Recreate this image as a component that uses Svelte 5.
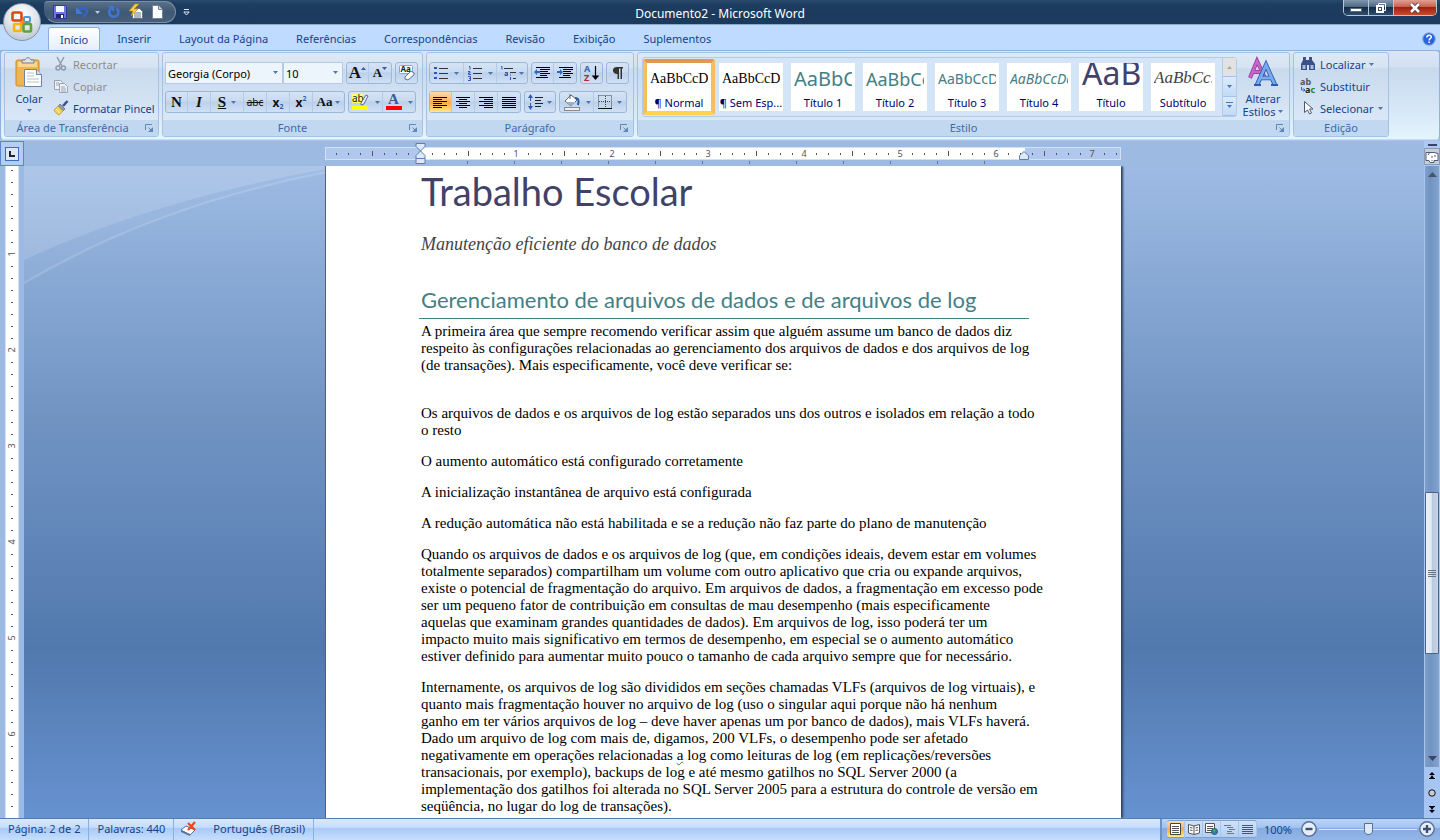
<script lang="ts">
	const tabs = [
		'Início',
		'Inserir',
		'Layout da Página',
		'Referências',
		'Correspondências',
		'Revisão',
		'Exibição',
		'Suplementos'
	];

	const styles = [
		{ name: '¶ Normal', sample: 'AaBbCcDd', kind: 'serif' },
		{ name: '¶ Sem Esp...', sample: 'AaBbCcDd', kind: 'serif' },
		{ name: 'Título 1', sample: 'AaBbCc', kind: 'h1' },
		{ name: 'Título 2', sample: 'AaBbCc', kind: 'h2' },
		{ name: 'Título 3', sample: 'AaBbCcD', kind: 'h3' },
		{ name: 'Título 4', sample: 'AaBbCcDd', kind: 'h4' },
		{ name: 'Título', sample: 'AaB', kind: 'title' },
		{ name: 'Subtítulo', sample: 'AaBbCc.', kind: 'sub' }
	];

	// Eighths of an inch, counted from the left margin and from the top one
	const hMarks = Array.from({ length: 66 }, (_, i) => i - 7);
	const vMarks = Array.from({ length: 56 }, (_, i) => i + 1);

	const intro = [
		'A primeira área que sempre recomendo verificar assim que alguém assume um banco de dados diz',
		'respeito às configurações relacionadas ao gerenciamento dos arquivos de dados e dos arquivos de log',
		'(de transações). Mais especificamente, você deve verificar se:'
	];

	// Text between bars is flagged by the grammar checker
	const paragraphs = [
		[
			'Os arquivos de dados e os arquivos de log estão separados uns dos outros e isolados em relação a todo',
			'o resto'
		],
		['O aumento automático está configurado corretamente'],
		['A inicialização instantânea de arquivo está configurada'],
		['A redução automática não está habilitada e se a redução não faz parte do plano de manutenção'],
		[
			'Quando os arquivos de dados e os arquivos de log (que, em condições ideais, devem estar em volumes',
			'totalmente separados) compartilham um volume com outro aplicativo que cria ou expande arquivos,',
			'existe o potencial de fragmentação do arquivo. Em arquivos de dados, a fragmentação em excesso pode',
			'ser um pequeno fator de contribuição em consultas de mau desempenho (mais especificamente',
			'aquelas que examinam grandes quantidades de dados). Em arquivos de log, isso poderá ter um',
			'impacto muito mais significativo em termos de desempenho, em especial se o aumento automático',
			'estiver definido para aumentar muito pouco o tamanho de cada arquivo sempre que for necessário.'
		],
		[
			'Internamente, os arquivos de log são divididos em seções chamadas VLFs (arquivos de log virtuais), e',
			'quanto mais fragmentação houver no arquivo de log (uso o singular aqui porque não há nenhum',
			'ganho em ter vários arquivos de log – deve haver apenas um por banco de dados), mais VLFs haverá.',
			'Dado um arquivo de log com mais de, digamos, 200 VLFs, o desempenho pode ser afetado',
			'negativamente em operações relacionadas |a| log como leituras de log (em replicações/reversões',
			'transacionais, por exemplo), backups de log e até mesmo gatilhos no SQL Server 2000 (a',
			'implementação dos gatilhos foi alterada no SQL Server 2005 para a estrutura do controle de versão em',
			'seqüência, no lugar do log de transações).'
		]
	];

	let activeTab = $state('Início');
	let activeStyle = $state(0);
	let font = $state('Georgia (Corpo)');
	let size = $state('10');
</script>

{#snippet arrow()}
	<svg class="arrow" width="5" height="3" viewBox="0 0 5 3"><path d="M0 0h5L2.5 3z" fill="#4a78b4" /></svg>
{/snippet}

{#snippet launcher(label: string)}
	<button class="launcher" aria-label={label}>
		<svg width="9" height="9" viewBox="0 0 9 9" fill="none" stroke="#6287b0">
			<path d="M.5 6V.5H7M3.5 3.5l3 3" />
			<path d="M8 3v5H3z" fill="#6287b0" stroke="none" />
		</svg>
	</button>
{/snippet}

{#snippet lines(rows: number[][])}
	<svg width="15" height="13" viewBox="0 0 15 13">
		{#each rows as [x, w], i}
			<rect {x} y={i * 2 + 1} width={w} height="1" fill="#000" />
		{/each}
	</svg>
{/snippet}

{#snippet paragraph(rows: string[])}
	<p>
		{#each rows as row}
			<span class="line">{#each row.split('|') as part, i}<span class:grammar={i === 1}>{part}</span>{/each}</span>
		{/each}
	</p>
{/snippet}

<div class="word">
	<header class="titlebar">
		<button class="office" aria-label="Botão Office">
			<svg width="24" height="24" viewBox="0 0 24 24" fill="none" stroke-width="2.6">
				<rect x="2.500" y="2.500" width="9" height="8" rx="1.500" stroke="#dc4a12" />
				<rect x="14" y="7" width="6" height="5" rx="1" stroke="#4a9bdc" stroke-width="2" />
				<rect x="4" y="14" width="7" height="7" rx="1" stroke="#f5b416" />
				<rect x="13.500" y="14" width="7.500" height="7.500" rx="1" stroke="#5aa436" />
				<path d="M10 12.500h5M12.500 10v5" stroke="#f08c1e" stroke-width="1.500" />
			</svg>
		</button>
		<div class="quick">
			<button aria-label="Salvar">
				<svg width="16" height="16" viewBox="0 0 16 16">
					<path d="M1.500 1.500h12l1 1v12h-13z" fill="#6f74e0" stroke="#34379c" />
					<path d="M4 2h8v6H4z" fill="#f5f7ff" />
					<path d="M4 10h8v4H4z" fill="#252763" />
					<path d="M9 11h2v3H9z" fill="#fff" />
				</svg>
			</button>
			<button class="undo" aria-label="Desfazer">
				<svg width="15" height="14" viewBox="0 0 15 14" fill="none">
					<path d="M4 6c2-4 8-4 8 0 0 3-2 4-4 6" stroke="#2f66c8" stroke-width="2.400" />
					<path d="M1 2v7h7z" fill="#3f78d8" />
				</svg>
				<svg width="5" height="3" viewBox="0 0 5 3"><path d="M0 0h5L2.500 3z" fill="#b8cce4" /></svg>
			</button>
			<button aria-label="Refazer">
				<svg width="14" height="14" viewBox="0 0 14 14" fill="none">
					<path d="M9.500 3.400a4.600 4.600 0 1 1-6 .6" stroke="#3f76d4" stroke-width="2.600" />
					<path d="M1 1h6v6z" fill="#3f76d4" />
				</svg>
			</button>
			<button aria-label="Novo do modelo">
				<svg width="16" height="16" viewBox="0 0 16 16">
					<path d="M4.500 4.500h7l3 3v7h-10z" fill="#fff" stroke="#63738a" />
					<path d="M6 9h7M6 11h7M6 13h7" stroke="#63738a" />
					<path d="M7 0L1 7h4l-2 5 7-7H6l5-5z" fill="#fdd23a" stroke="#c98a12" stroke-width=".6" />
				</svg>
			</button>
			<button aria-label="Novo">
				<svg width="13" height="16" viewBox="0 0 13 16">
					<path d="M1.500 1.500h6l4 4v9h-10z" fill="#fff" stroke="#71829c" />
					<path d="M7.500 1.500v4h4" fill="#cfd9e8" stroke="#71829c" />
				</svg>
			</button>
		</div>
		<button class="customize" aria-label="Personalizar">
			<svg width="7" height="7" viewBox="0 0 7 7"><path d="M1 .5h5" stroke="#dce8f6" /><path d="M.8 3h5.400L3.500 6z" fill="none" stroke="#dce8f6" /></svg>
		</button>
		<h1>Documento2 - Microsoft Word</h1>
		<div class="window-buttons">
			<button aria-label="Minimizar">
				<svg width="12" height="12" viewBox="0 0 12 12"><path d="M.5 6.500h11v3H.5z" fill="#fff" stroke="#5c6b7c" /></svg>
			</button>
			<button aria-label="Restaurar">
				<svg width="12" height="12" viewBox="0 0 12 12" fill="none">
					<path d="M3.500 1.500h7v7h-7z" stroke="#fff" />
					<path d="M2 4h6v6H2z" fill="#34506e" stroke="#fff" stroke-width="2" />
					<path d="M4 6h2v2H4z" fill="#fff" />
				</svg>
			</button>
			<button class="close" aria-label="Fechar">
				<svg width="12" height="10" viewBox="0 0 12 10"><path d="M2 1l8 8M10 1L2 9" stroke="#4d2c2c" stroke-width="4" /><path d="M2 1l8 8M10 1L2 9" stroke="#fff" stroke-width="2.600" /></svg>
			</button>
		</div>
	</header>

	<nav class="tabs">
		{#each tabs as tab}
			<button class:active={tab === activeTab} onclick={() => (activeTab = tab)}>{tab}</button>
		{/each}
		<button class="help" aria-label="Ajuda">
			<svg width="14" height="14" viewBox="0 0 14 14">
				<circle cx="7" cy="7" r="6.300" fill="#2a63dc" stroke="#8fb0e0" />
				<path d="M4.800 5.400c0-3 4.500-2.800 4.500-.3 0 1.600-2.200 1.500-2.200 3.300" fill="none" stroke="#fff" stroke-width="1.500" />
				<path d="M6.300 9.500h1.600v1.600H6.300z" fill="#fff" />
			</svg>
		</button>
	</nav>

	<div class="ribbon">
		<section class="group clipboard">
			<div class="body">
				<button class="paste">
					<svg width="30" height="32" viewBox="0 0 30 32">
						<rect x="2" y="3" width="23" height="26" rx="1.500" fill="#efb551" stroke="#c98a2c" />
						<path d="M4 5h19v5H4z" fill="#f9d78e" />
						<path d="M8 6V3h3c1-3 5-3 6 0h3v3z" fill="#dfe3e8" stroke="#7b7f86" />
						<path d="M10.500 12.500h12l5 5v12h-17z" fill="#fff" stroke="#6b83a6" />
						<path d="M22.500 12.500v5h5" fill="#d6e2f2" stroke="#6b83a6" />
						<path d="M13 16h7M13 19h7M13 22h12M13 25h12" stroke="#b4bfcd" />
					</svg>
					<span>Colar</span>
					{@render arrow()}
				</button>
				<div class="stack">
					<button disabled>
						<svg width="16" height="16" viewBox="0 0 16 16" fill="none" stroke="#8f9bab" stroke-width="1.500">
							<path d="M4 1l5 9M11 1L6 10" />
							<circle cx="5" cy="12" r="2" /><circle cx="10.500" cy="12" r="2" />
						</svg>
						Recortar
					</button>
					<button disabled>
						<svg width="16" height="16" viewBox="0 0 16 16" fill="#eef2f6" stroke="#98a3b3">
							<path d="M1.500 2.500h6l2 2v7h-8z" /><path d="M6.500 5.500h5l3 3v6h-8z" />
							<path d="M3 5h3M3 7h3M8 9h4M8 11h5M8 13h5" />
						</svg>
						Copiar
					</button>
					<button>
						<svg width="16" height="16" viewBox="0 0 16 16">
							<path d="M14.500 1L10 6" stroke="#3c4f94" stroke-width="2.600" />
							<path d="M7 4l5 5-2 1.500L5.500 6z" fill="#93a2c0" stroke="#515e80" stroke-width=".7" />
							<path d="M5 6l5 5-4 4c-2-1-4-3-5-5z" fill="#f4cf62" stroke="#b98b20" stroke-width=".7" />
							<path d="M3 9l4 4" stroke="#fff3b8" />
						</svg>
						Formatar Pincel
					</button>
				</div>
			</div>
			<footer>Área de Transferência{@render launcher('Área de Transferência')}</footer>
		</section>

		<section class="group">
			<div class="body rows">
				<div class="row">
					<div class="combos">
						<label class="combo family">
							<select bind:value={font} aria-label="Fonte">
								<option>Georgia (Corpo)</option>
								<option>Trebuchet MS</option>
							</select>
							{@render arrow()}
						</label>
						<label class="combo">
							<select bind:value={size} aria-label="Tamanho da fonte">
								<option>10</option>
								<option>12</option>
							</select>
							{@render arrow()}
						</label>
					</div>
					<div class="set">
						<button class="grow" aria-label="Aumentar fonte">A<svg width="5" height="3" viewBox="0 0 5 3"><path d="M0 3h5L2.500 0z" fill="#2f5f9f" /></svg></button>
						<button class="shrink" aria-label="Reduzir fonte">A<svg width="5" height="3" viewBox="0 0 5 3"><path d="M0 0h5L2.500 3z" fill="#2f5f9f" /></svg></button>
					</div>
					<div class="set">
						<button aria-label="Limpar formatação">
							<svg width="18" height="18" viewBox="0 0 18 18">
								<rect x="1.500" y="1.500" width="13" height="8" rx="1" fill="#fff" stroke="#8ba6cc" />
								<text x="2.500" y="8" font-size="8" font-weight="bold" fill="#222">Aa</text>
								<path d="M7 13l6-6 3 2v2l-6 5-3-1z" fill="#f4f6fa" stroke="#5f7192" />
							</svg>
						</button>
					</div>
				</div>
				<div class="row">
					<div class="set">
						<button class="glyph bold" aria-label="Negrito">N</button>
						<button class="glyph italic" aria-label="Itálico">I</button>
						<button class="glyph under wide" aria-label="Sublinhado"><u>S</u>{@render arrow()}</button>
						<button class="strike" aria-label="Tachado"><s>abc</s></button>
						<button class="script" aria-label="Subscrito">x<sub>2</sub></button>
						<button class="script" aria-label="Sobrescrito">x<sup>2</sup></button>
						<button class="case" aria-label="Maiúsculas e minúsculas">Aa{@render arrow()}</button>
					</div>
					<div class="set">
						<button class="wide" aria-label="Cor do realce">
							<svg width="18" height="18" viewBox="0 0 18 18">
								<path d="M0 1h11v9H0z" fill="#ffff6a" />
								<text x="0" y="9" font-size="10" fill="#222">ab</text>
								<path d="M9 10l5-8 2 1-4 8-3 1z" fill="#e8eef8" stroke="#5b6f92" />
								<path d="M0 13h16v4H0z" fill="#ff0" />
							</svg>
							{@render arrow()}
						</button>
						<button class="wide" aria-label="Cor da fonte">
							<svg width="18" height="18" viewBox="0 0 18 18">
								<text x="3" y="11" font-size="15" font-weight="bold" class="serif-glyph" fill="#3b5b9e">A</text>
								<path d="M1 13h16v4H1z" fill="#f00" />
							</svg>
							{@render arrow()}
						</button>
					</div>
				</div>
			</div>
			<footer>Fonte{@render launcher('Fonte')}</footer>
		</section>

		<section class="group">
			<div class="body rows">
				<div class="row">
					<div class="set">
						<button class="wide" aria-label="Marcadores">
							<svg width="15" height="14" viewBox="0 0 15 14">
								<path d="M0 1h3v2H0zM0 6h3v2H0zM0 11h3v2H0z" fill="#3056ae" />
								<path d="M5 2.500h9M5 7.500h9M5 12.500h9" stroke="#333" />
							</svg>
							{@render arrow()}
						</button>
						<button class="wide" aria-label="Numeração">
							<svg width="15" height="15" viewBox="0 0 15 15">
								<path d="M1 .5h1v3M0 5.500h2v1.500H.5v1.500H3M0 10.500h2.500v4H0M1 12.500h1" fill="none" stroke="#3056ae" />
								<path d="M5 2.500h9M5 7.500h9M5 12.500h9" stroke="#333" />
							</svg>
							{@render arrow()}
						</button>
						<button class="multi" aria-label="Lista de vários níveis">
							<svg width="17" height="15" viewBox="0 0 17 15">
								<path d="M1 .5h1v3M5 6.500h2.500v3H5v-1.500h2M10.500 11v3M10.500 8.500v1" fill="none" stroke="#3056ae" />
								<path d="M4 2.500h9M10 6.500h6M13 12.500h3" stroke="#333" />
							</svg>
							{@render arrow()}
						</button>
					</div>
					<div class="set">
						<button aria-label="Diminuir recuo">
							<svg width="17" height="14" viewBox="0 0 17 14">
								<path d="M2 1.500h14M7 3.500h9M7 5.500h7M7 7.500h9M7 9.500h6M2 11.500h12" stroke="#000" />
								<path d="M6.500 1v12" stroke="#000" stroke-dasharray="1 1" />
								<path d="M0 6l3-3v2h3v2H3v2z" fill="#2f66c4" />
							</svg>
						</button>
						<button aria-label="Aumentar recuo">
							<svg width="17" height="14" viewBox="0 0 17 14">
								<path d="M2 1.500h14M7 3.500h9M7 5.500h7M7 7.500h9M7 9.500h6M2 11.500h12" stroke="#000" />
								<path d="M6.500 1v12" stroke="#000" stroke-dasharray="1 1" />
								<path d="M6 6L3 3v2H0v2h3v2z" fill="#2f66c4" />
							</svg>
						</button>
					</div>
					<div class="set">
						<button aria-label="Classificar">
							<svg width="17" height="18" viewBox="0 0 17 18">
								<text x="1" y="8" font-size="9" font-weight="bold" fill="#3c62b0">A</text>
								<text x="1" y="17" font-size="9" font-weight="bold" fill="#a22c2c">Z</text>
								<path d="M12.500 2v12M10 12l2.500 3 2.500-3z" fill="#000" stroke="#000" stroke-width="1.200" />
							</svg>
						</button>
					</div>
					<div class="set">
						<button aria-label="Mostrar tudo">
							<svg width="12" height="14" viewBox="0 0 12 14">
								<path d="M5 1h6v1.500H10V13H8.500V2.500H7V13H5.500V8C-.5 8-.5 1 5 1z" fill="#333" />
							</svg>
						</button>
					</div>
				</div>
				<div class="row">
					<div class="set">
						<button class="pressed" aria-label="Alinhar à esquerda">{@render lines([[0, 14], [0, 9], [0, 14], [0, 9], [0, 14], [0, 9]])}</button>
						<button aria-label="Centralizar">{@render lines([[0, 14], [3, 8], [0, 14], [3, 8], [0, 14], [3, 8]])}</button>
						<button aria-label="Alinhar à direita">{@render lines([[0, 14], [5, 9], [0, 14], [5, 9], [0, 14], [5, 9]])}</button>
						<button aria-label="Justificar">{@render lines([[0, 14], [0, 14], [0, 14], [0, 14], [0, 14], [0, 14]])}</button>
					</div>
					<div class="set">
						<button class="spacing" aria-label="Espaçamento">
							<svg width="16" height="16" viewBox="0 0 16 16">
								<path d="M2.500 3v10" stroke="#2f5cae" stroke-dasharray="4 2" />
								<path d="M0 4l2.500-4L5 4zM0 12l2.500 4L5 12z" fill="#2f5cae" />
								<path d="M7 3.500h8M7 6.500h6M7 9.500h8M7 12.500h6" stroke="#222" />
							</svg>
							{@render arrow()}
						</button>
					</div>
					<div class="set">
						<button class="wide" aria-label="Sombreamento">
							<svg width="18" height="18" viewBox="0 0 18 18">
								<path d="M2 8l6-6 6 5-6 6z" fill="#fff" stroke="#5c6472" />
								<path d="M3 9h10l-5 4z" fill="#9bb2cf" />
								<path d="M7 1v5" stroke="#5c6472" />
								<path d="M12 5c4 0 4 3 3 7" fill="none" stroke="#2757a8" stroke-width="2" />
								<rect x="1.500" y="14.500" width="15" height="3" fill="#eee" stroke="#888" />
							</svg>
							{@render arrow()}
						</button>
						<button class="wide" aria-label="Bordas">
							<svg width="14" height="14" viewBox="0 0 14 14" fill="none" stroke="#444">
								<path d="M.5.5h13v12M.5.5v12M7.500 1v12M1 6.500h12" stroke-dasharray="1 1" />
								<path d="M0 13.500h14" stroke="#111" />
							</svg>
							{@render arrow()}
						</button>
					</div>
				</div>
			</div>
			<footer>Parágrafo{@render launcher('Parágrafo')}</footer>
		</section>

		<section class="group style-group">
			<div class="body">
				<div class="gallery">
					<div class="cards">
						{#each styles as style, i}
							<button class="card" class:selected={i === activeStyle} onclick={() => (activeStyle = i)}>
								<span class="sample {style.kind}">{style.sample}</span>
								<span class="name">{style.name}</span>
							</button>
						{/each}
					</div>
					<div class="gallery-scroll">
						<button disabled aria-label="Linha anterior"><svg width="5" height="3" viewBox="0 0 5 3"><path d="M0 3h5L2.500 0z" fill="#a9a9a9" /></svg></button>
						<button aria-label="Próxima linha">{@render arrow()}</button>
						<button aria-label="Mais">
							<svg width="7" height="7" viewBox="0 0 7 7"><path d="M0 .5h7" stroke="#4a78b4" /><path d="M1 3h5L3.500 6z" fill="#4a78b4" /></svg>
						</button>
					</div>
				</div>
				<button class="change-styles">
					<svg width="32" height="30" viewBox="0 0 32 30" fill="none">
						<path d="M3 20L10 3l8 17M5.500 14h10" stroke="#8c3a9c" stroke-width="4" />
						<path d="M3 20L10 3l8 17M5.500 14h10" stroke="#ce62c8" stroke-width="2.400" />
						<path d="M10 27L19 7l9 20M12 20h13" stroke="#2c5cac" stroke-width="4.500" />
						<path d="M10 27L19 7l9 20M12 20h13" stroke="#78aaf0" stroke-width="2.800" />
						<path d="M7 27h7M24 27h7" stroke="#2c5cac" stroke-width="2" />
					</svg>
					<span>Alterar</span>
					<span>Estilos {@render arrow()}</span>
				</button>
			</div>
			<footer>Estilo{@render launcher('Estilo')}</footer>
		</section>

		<section class="group editing">
			<div class="body">
				<div class="stack">
					<button>
						<svg width="16" height="16" viewBox="0 0 16 16" fill="#3a5288">
							<path d="M3 1h3v3h3V1h3v3l3 4v6H9V9H7v5H1V8l2-4z" /><path d="M2.500 9h3v4h-3zM10.500 9h3v4h-3z" fill="#a9bde0" />
						</svg>
						Localizar {@render arrow()}
					</button>
					<button>
						<svg width="16" height="16" viewBox="0 0 16 16" font-weight="bold">
							<text x="0" y="7" font-size="9" fill="#555">ab</text>
							<text x="5" y="15" font-size="9" fill="#222">a<tspan fill="#21852c">c</tspan></text>
							<path d="M1.500 9v3H5M3.500 10.500L5 12l-1.500 1.500" fill="none" stroke="#3c62b0" />
						</svg>
						Substituir
					</button>
					<button>
						<svg width="16" height="16" viewBox="0 0 16 16"><path d="M4.500 1.500v11l3-2.500 2 4 2-1-2-4h3.500z" fill="#fff" stroke="#4c5a70" /></svg>
						Selecionar {@render arrow()}
					</button>
				</div>
			</div>
			<footer>Edição</footer>
		</section>
	</div>

	<div class="ruler-bar">
		<button class="tab-kind" aria-label="Tabulação esquerda">
			<svg width="14" height="14" viewBox="0 0 14 14"><rect x=".5" y=".5" width="13" height="13" fill="#dce8fa" stroke="#3f6cc0" /><path d="M5 4v5h5" fill="none" stroke="#222" stroke-width="2" /></svg>
		</button>
		<div class="ruler-area">
			<div class="ruler">
				<div class="scale">
					{#each hMarks as k}
						<span class="mark" class:half={k % 8 === 4 || k % 8 === -4} class:number={k % 8 === 0}>
							{#if k % 8 === 0 && k > 0}{k / 8}{/if}
						</span>
					{/each}
				</div>
				<div class="stops">
					{#each Array(13) as _}<span></span>{/each}
				</div>
				<svg class="indent left" width="11" height="22" viewBox="0 0 11 22" fill="#dde8f8" stroke="#5b7fb4">
					<path d="M1 .5h9v3L5.500 8 1 3.500zM1 15.500v-3L5.500 8l4.500 4.500v3zM1 15.500h9v5H1z" />
				</svg>
				<svg class="indent right" width="10" height="9" viewBox="0 0 10 9" fill="#dde8f8" stroke="#5b7fb4"><path d="M.5 8.500v-4L5 .5l4.500 4v4z" /></svg>
			</div>
		</div>
		<div class="ruler-toggle">
			<i></i>
			<button aria-label="Exibir régua">
				<svg width="14" height="13" viewBox="0 0 14 13" fill="#fff" stroke="#4c5a78"><path d="M1 2.500h8l4 1v7h-4v2H5l-1-2H1zM3 5l2-3M7 6v2M10 5v2M7 10v1" /></svg>
			</button>
		</div>
	</div>

	<main>
		<div class="v-ruler">
			<div class="v-scale">
				{#each vMarks as k}
					<span class:half={k % 8 === 4} class:number={k % 8 === 0}>{#if k % 8 === 0}<b>{k / 8}</b>{/if}</span>
				{/each}
			</div>
		</div>
		<div class="workspace">
			<svg class="swoosh" width="302" height="120" viewBox="0 0 302 120">
				<path d="M0 0h302v3Q130 34 0 94z" fill="#fff" opacity=".17" />
				<path d="M0 119Q130 42 302 8V3Q130 34 0 94z" fill="#fff" opacity=".04" />
				<path d="M0 117Q130 40 302 6" fill="none" stroke="#fff" stroke-width="2" opacity=".14" />
			</svg>
			<article class="page">
				<h2 class="doc-title">Trabalho Escolar</h2>
				<p class="doc-subtitle">Manutenção eficiente do banco de dados</p>
				<h3>Gerenciamento de arquivos de dados e de arquivos de log</h3>
				<div class="intro">{@render paragraph(intro)}</div>
				{#each paragraphs as rows}
					{@render paragraph(rows)}
				{/each}
			</article>
		</div>
		<div class="scrollbar">
			<div class="track">
				<button aria-label="Para cima"><svg width="9" height="5" viewBox="0 0 9 5"><path d="M0 5h9L4.500 0z" fill="#47536e" /></svg></button>
				<div class="before"></div>
				<div class="thumb"><i></i></div>
				<div class="after"></div>
				<button aria-label="Para baixo"><svg width="9" height="5" viewBox="0 0 9 5"><path d="M0 0h9L4.500 5z" fill="#3c4464" /></svg></button>
			</div>
			<button class="browse" aria-label="Página anterior"><svg width="6" height="7" viewBox="0 0 6 7"><path d="M0 3L3 0l3 3zM1 6l2-3 2 3zM0 6h6v1H0z" /></svg></button>
			<button class="browse" aria-label="Selecionar objeto"><svg width="8" height="8" viewBox="0 0 8 8"><circle cx="4" cy="4" r="3.200" fill="#c9ccd2" stroke="#111" /></svg></button>
			<button class="browse" aria-label="Próxima página"><svg width="6" height="7" viewBox="0 0 6 7"><path d="M0 4l3 3 3-3zM1 1l2 3 2-3zM0 0h6v1H0z" /></svg></button>
		</div>
	</main>

	<footer class="status">
		<span class="cell">Página: 2 de 2</span>
		<span class="cell">Palavras: 440</span>
		<span class="cell spell">
			<svg width="17" height="15" viewBox="0 0 17 15">
				<path d="M1 9l5-4 9 4-5 5z" fill="#fff" stroke="#5572a0" /><path d="M1 9v2l9 4v-2z" fill="#5572a0" />
				<path d="M8 2l7 7M15 1L8 9" stroke="#e8481c" stroke-width="2.200" />
			</svg>
			Português (Brasil)
		</span>
		<div class="tools">
			<div class="views">
				<button class="pressed" aria-label="Layout de impressão"><svg width="11" height="12" viewBox="0 0 11 12"><path d="M.5.5h10v11H.5z" fill="#fff" stroke="#444" /><path d="M2 3.500h7M2 5.500h7M2 7.500h7M2 9.500h7" stroke="#555" /></svg></button>
				<button aria-label="Leitura"><svg width="12" height="12" viewBox="0 0 12 12"><path d="M.5 1.500L6 3l5.500-1.500V10L6 11.500.5 10zM6 3v8" fill="#fff" stroke="#555" /><path d="M2 4.500l2.500.5M2 7l2.500.5M10 4.500L7.500 5M10 7l-2.500.5" stroke="#555" /></svg></button>
				<button aria-label="Layout da Web"><svg width="13" height="12" viewBox="0 0 13 12"><path d="M.5.5h9v9h-9z" fill="#fff" stroke="#555" /><path d="M2 3.500h6M2 5.500h6M2 7.500h5" stroke="#555" /><circle cx="9.500" cy="8.500" r="3" fill="#2e86a8" stroke="#2a5a6c" /><path d="M8 7l2-1v3z" fill="#59b84a" /></svg></button>
				<button aria-label="Estrutura de tópicos"><svg width="11" height="11" viewBox="0 0 11 11"><path d="M0 1.500h7M3 3.500h6M5 5.500h6M3 7.500h5M3 9.500h7" stroke="#777" /></svg></button>
				<button aria-label="Rascunho"><svg width="11" height="11" viewBox="0 0 11 11"><path d="M0 1.500h11M0 3.500h11M0 5.500h11M0 7.500h11M0 9.500h11" stroke="#555" /></svg></button>
			</div>
			<button class="percent">100%</button>
			<button class="round" aria-label="Reduzir"><svg width="16" height="16" viewBox="0 0 16 16"><circle cx="8" cy="8" r="7.200" fill="#e8eef7" stroke="#566f96" stroke-width="1.400" /><path d="M4.500 8h7" stroke="#3d4f70" stroke-width="2.400" /></svg></button>
			<input type="range" min="0" max="100" value="50" aria-label="Zoom" />
			<button class="round" aria-label="Ampliar"><svg width="16" height="16" viewBox="0 0 16 16"><circle cx="8" cy="8" r="7.200" fill="#e8eef7" stroke="#566f96" stroke-width="1.400" /><path d="M4 8h8M8 4v8" stroke="#3d4f70" stroke-width="2.400" /></svg></button>
		</div>
	</footer>
</div>

<style>
	:global(body) {
		margin: 0;
		overflow: hidden;
	}

	.word {
		height: 100vh;
		display: flex;
		flex-direction: column;
		font-family: 'Noto Sans', 'Open Sans', sans-serif;
		font-size: 11px;
		color: #15428b;
		background: #9cbae2;
	}

	.word :global(*) {
		box-sizing: border-box;
	}

	button {
		all: unset;
		box-sizing: border-box;
		display: flex;
		align-items: center;
		justify-content: center;
		white-space: nowrap;
		cursor: default;
	}

	svg {
		flex: none;
		display: block;
		overflow: visible;
	}

	/* Title bar */
	.titlebar {
		position: relative;
		flex: none;
		display: flex;
		align-items: center;
		height: 25px;
		background: linear-gradient(#2a4a6c, #1c3c60 20%, #1b3a5d);
		border-bottom: 1px solid #8fa9c4;
	}

	.office {
		position: absolute;
		z-index: 2;
		left: 3px;
		top: 3px;
		width: 38px;
		height: 38px;
		border-radius: 50%;
		background: radial-gradient(circle at 50% 30%, #fff, #dfe4ec 50%, #a9b6c8);
		border: 1px solid #8794a8;
	}

	.quick {
		display: flex;
		align-items: center;
		gap: 7px;
		height: 22px;
		margin-left: 44px;
		padding: 0 11px 0 7px;
		border: 1px solid #7b8ea6;
		border-left-color: transparent;
		border-radius: 4px 12px 12px 14px;
		background: linear-gradient(#5b7089, #3f5873 50%, #475f7b);
	}

	.undo {
		gap: 5px;
	}

	.customize {
		margin-left: 7px;
	}

	h1 {
		position: absolute;
		left: 50%;
		top: 5px;
		margin: 0;
		transform: translateX(-50%);
		font-size: 12px;
		line-height: 18px;
		font-weight: normal;
		color: #fff;
		white-space: nowrap;
	}

	.window-buttons {
		display: flex;
		align-self: flex-start;
		margin-left: auto;
		margin-right: 3px;
		height: 16px;
		border: 1px solid #b7c5d4;
		border-top: 0;
		border-radius: 0 0 5px 5px;
		overflow: hidden;
	}

	.window-buttons button {
		width: 25px;
		background: linear-gradient(#8297ae, #4d6884 45%, #132c48 50%, #2f4e70);
		border-right: 1px solid #b7c5d4;
	}

	.window-buttons .close {
		width: 42px;
		border: 0;
		background: linear-gradient(#e0a093, #c8604c 45%, #a51f0c 50%, #c94a2c);
	}

	/* Tabs */
	.tabs {
		flex: none;
		display: flex;
		height: 25px;
		padding: 2px 4px 0 45px;
		background: #bfdbff;
	}

	.tabs button {
		padding: 0 14px;
	}

	.tabs .active {
		margin: 0 3px;
		padding: 0 11px;
		border: 1px solid #8bb0e0;
		border-bottom: 0;
		border-radius: 3px 3px 0 0;
		background: linear-gradient(#fff, #e4eefb);
	}

	.tabs .help {
		margin-left: auto;
		padding: 0;
	}

	/* Ribbon */
	.ribbon {
		flex: none;
		display: flex;
		gap: 3px;
		height: 90px;
		padding: 1px 50px 2px 3px;
		border: 1px solid #8db2e3;
		border-bottom-color: #9ff0fa;
		border-radius: 4px;
		background: linear-gradient(#dbe6f4, #d2e0f1 18%, #c8d9ed 19%, #d8e8f8 70%, #e4f5fd);
	}

	.group {
		display: flex;
		flex-direction: column;
		border: 1px solid #a3c2e4;
		border-radius: 3px;
		background: linear-gradient(#dfe8f4, #d6e3f2 18%, #c9daed 19%, #d9e7f7 80%);
		overflow: hidden;
	}

	.body {
		flex: 1;
		display: flex;
	}

	.group footer {
		position: relative;
		flex: none;
		height: 16px;
		line-height: 16px;
		text-align: center;
		color: #3e6aaa;
		background: #c1d8f0;
	}

	.clipboard footer {
		padding-right: 18px;
	}

	.launcher {
		position: absolute;
		right: 4px;
		top: 4px;
	}

	.clipboard {
		width: 155px;
	}

	.paste {
		flex-direction: column;
		justify-content: flex-start;
		width: 48px;
		padding-top: 4px;
	}

	.paste span {
		line-height: 20px;
	}

	.stack {
		display: flex;
		flex-direction: column;
	}

	.stack button {
		justify-content: flex-start;
		gap: 4px;
		height: 22px;
	}

	.stack button:disabled {
		color: #8d8d8d;
	}

	.rows {
		flex-direction: column;
		gap: 7px;
		padding: 9px 4px 0 2px;
	}

	.row {
		display: flex;
		gap: 3px;
	}

	.combos {
		display: flex;
	}

	.combo {
		position: relative;
		width: 60px;
	}

	.combo.family {
		width: 118px;
	}

	.combo select {
		width: 100%;
		height: 22px;
		padding: 0 2px;
		appearance: none;
		border: 1px solid #b4cbe8;
		border-radius: 0;
		background: #ecf4fc;
		font: inherit;
		color: #000;
	}

	.combo .arrow {
		position: absolute;
		right: 5px;
		top: 9px;
	}

	.set {
		display: flex;
		height: 22px;
		border: 1px solid #9ab8dc;
		border-radius: 3px;
		background: linear-gradient(#d5e3f4, #c9daf0 45%, #bcd0ea 50%, #cfe0f6);
	}

	.set button {
		width: 21px;
		gap: 3px;
		color: #111;
	}

	.set button + button {
		border-left: 1px solid #b4cbe8;
		width: 23px;
	}

	.set .wide,
	.set .wide + .wide,
	.set button + .wide {
		width: 33px;
		gap: 5px;
	}

	.set button + .multi {
		width: 31px;
		gap: 2px;
	}

	.set .spacing {
		width: 30px;
	}

	.set button + .case {
		width: 32px;
		font: bold 13px 'Liberation Serif', serif;
	}

	.grow,
	.shrink,
	.glyph {
		font: bold 15px 'Liberation Serif', serif;
	}

	.set .grow,
	.set .shrink {
		gap: 0;
	}

	.grow {
		font-size: 17px;
	}

	.shrink {
		font-size: 13px;
	}

	.grow svg,
	.shrink svg {
		align-self: flex-start;
		margin-top: 4px;
	}

	.italic {
		font-style: italic;
	}

	.strike {
		font-size: 10px;
	}

	.script {
		font-weight: bold;
		font-size: 12px;
	}

	.set .script {
		gap: 0;
	}

	sub,
	sup {
		font-size: 7px;
		line-height: 7px;
		color: #2f5cae;
	}

	sub {
		align-self: flex-end;
		margin-bottom: 2px;
	}

	sup {
		align-self: flex-start;
		margin-top: 3px;
	}

	.serif-glyph {
		font-family: 'Liberation Serif', serif;
	}

	.set .pressed,
	.views .pressed {
		background: linear-gradient(#fbdbb0, #f9b461 45%, #fba93c 50%, #fde88c);
	}

	/* Style gallery */
	.style-group {
		flex: 1;
		min-width: 0;
	}

	.gallery {
		flex: 1;
		min-width: 0;
		display: flex;
		height: 60px;
		margin: 4px 0 0 4px;
		border: 1px solid #b2cbe9;
		border-radius: 3px;
		background: #d5e5f8;
	}

	.cards {
		flex: 1;
		min-width: 0;
		display: flex;
		align-items: center;
		overflow: hidden;
	}

	.card {
		flex: none;
		flex-direction: column;
		width: 72px;
		height: 56px;
		border: 4px solid transparent;
		border-radius: 3px;
		background: #fff padding-box;
	}

	.card.selected {
		border-color: #f8bd5c;
		border-top-color: #dd9a52;
		border-bottom-color: #fdd350;
	}

	.sample {
		width: 58px;
		height: 32px;
		line-height: 32px;
		overflow: hidden;
	}

	.name {
		line-height: 16px;
		color: #00006c;
	}

	.serif {
		font-family: 'Liberation Serif', serif;
		font-size: 14px;
		color: #000;
	}

	.h1,
	.h2,
	.h3,
	.h4 {
		font-size: 14px;
		color: #438086;
	}

	.h1 {
		font-size: 20px;
	}

	.h2 {
		font-size: 18px;
	}

	.h4 {
		font-style: italic;
	}

	.title {
		font-size: 32px;
		line-height: 20px;
		color: #424269;
	}

	.sub {
		font: italic 17px/30px 'Liberation Serif', serif;
		color: #444;
	}

	.gallery-scroll {
		flex: none;
		display: flex;
		flex-direction: column;
		width: 14px;
		border-left: 1px solid #b2cbe9;
	}

	.gallery-scroll button {
		flex: 1;
		background: linear-gradient(#dcebfc, #c3daf5);
		border-bottom: 1px solid #a5c2e6;
	}

	.gallery-scroll button:disabled {
		background: #e2e2e0;
	}

	.change-styles {
		flex-direction: column;
		justify-content: flex-start;
		width: 52px;
		padding-top: 5px;
	}

	.change-styles span {
		display: flex;
		align-items: center;
		gap: 3px;
		line-height: 13px;
	}

	.change-styles > svg {
		margin-bottom: 4px;
	}

	.editing {
		width: 96px;
	}

	.editing .stack {
		padding-left: 6px;
	}

	/* Horizontal ruler */
	.ruler-bar {
		flex: none;
		display: flex;
		height: 26px;
		background: #9cbae2;
		border-top: 1px solid #a9c4e6;
	}

	.tab-kind {
		width: 24px;
		border: 1px solid #5c86cc;
		background: #b4cdf2;
	}

	.ruler-area {
		flex: 1;
		min-width: 0;
		display: flex;
		justify-content: center;
		padding-right: 2px;
	}

	.ruler {
		position: relative;
		width: 796px;
		padding-top: 6px;
	}

	.scale {
		display: flex;
		height: 13px;
		padding-left: 4px;
		border: 1px solid #d2e1f6;
		background: linear-gradient(to right, #b0c8ee 95px, #fff 95px, #fff 699px, #b0c8ee 699px);
	}

	.mark {
		flex: none;
		display: flex;
		align-items: center;
		justify-content: center;
		width: 12px;
		font-size: 9px;
		line-height: 11px;
		color: #555;
	}

	.mark:not(.number)::before {
		content: '';
		width: 1px;
		height: 2px;
		background: #555;
	}

	.mark.half::before {
		height: 5px;
	}

	.stops {
		display: flex;
		padding: 1px 0 0 96px;
	}

	.stops span {
		width: 47px;
		height: 3px;
		border-right: 1px solid #777;
	}

	.stops span:last-child {
		border: 0;
	}

	.indent {
		position: absolute;
	}

	.indent.left {
		left: 90px;
		top: 2px;
	}

	.indent.right {
		left: 694px;
		top: 10px;
	}

	.ruler-toggle {
		width: 16px;
		display: flex;
		flex-direction: column;
		align-items: center;
		gap: 2px;
		background: #aac9f5;
	}

	.ruler-toggle i {
		width: 9px;
		height: 2px;
		margin-top: 3px;
		background: #3b4466;
	}

	.ruler-toggle button {
		width: 16px;
		height: 17px;
		border: 1px solid #8d9ab4;
		background: #c7cdd9;
	}

	/* Document area */
	main {
		flex: 1;
		min-height: 0;
		display: flex;
	}

	.v-ruler {
		flex: none;
		width: 24px;
		padding-left: 5px;
		background: #9cbae2;
		overflow: hidden;
	}

	.v-scale {
		width: 14px;
		height: 100%;
		border: solid #d2e1f6;
		border-width: 0 1px;
		background: #fff;
		overflow: hidden;
	}

	.v-scale span {
		display: flex;
		align-items: center;
		justify-content: center;
		height: 12px;
	}

	.v-scale span:first-child {
		margin-top: -2px;
	}

	.v-scale span:not(.number)::before {
		content: '';
		width: 2px;
		height: 1px;
		background: #555;
	}

	.v-scale .half::before {
		width: 5px;
	}

	.v-scale b {
		font-size: 9px;
		line-height: 12px;
		font-weight: normal;
		color: #555;
		transform: rotate(-90deg);
	}

	.workspace {
		position: relative;
		flex: 1;
		min-width: 0;
		display: flex;
		justify-content: center;
		padding-right: 2px;
		overflow: hidden;
		background: linear-gradient(#9dbbe4, #7194c3 38%, #5279ae 74%, #6692d0);
	}

	.swoosh {
		position: absolute;
		left: 0;
		top: 0;
	}

	.page {
		position: relative;
		width: 796px;
		padding: 0 92px 0 95px;
		border-left: 1px solid #555f70;
		background: #fff;
		box-shadow: 2px 0 2px #30435f;
		color: #000;
		font-family: 'Liberation Serif', serif;
		font-size: 15px;
	}

	.doc-title {
		margin: 1px 0 0;
		font-family: Lato, 'Open Sans', sans-serif;
		font-weight: normal;
		font-size: 38px;
		line-height: 48px;
		color: #424269;
	}

	.doc-subtitle {
		margin: 18px 0 0;
		font-style: italic;
		font-size: 18px;
		line-height: 22px;
		color: #444;
	}

	h3 {
		margin: 29px 0 0 -2px;
		padding: 0 0 2px 2px;
		font-family: Lato, 'Open Sans', sans-serif;
		font-weight: normal;
		font-size: 22px;
		line-height: 32px;
		color: #438086;
		border-bottom: 1px solid #438086;
		white-space: nowrap;
	}

	.page p:not(.doc-subtitle) {
		margin: 0 0 14px;
		line-height: 17px;
	}

	.page .intro {
		padding: 4px 0 17px;
	}

	.line {
		display: block;
		white-space: nowrap;
	}

	.grammar {
		text-decoration: underline wavy #2e8b2e 1px;
	}

	/* Vertical scroll bar */
	.scrollbar {
		flex: none;
		display: flex;
		flex-direction: column;
		width: 16px;
		background: #a6c5f2;
	}

	.track {
		flex: 1;
		display: flex;
		flex-direction: column;
		border: solid #a6c5f2;
		border-width: 0 1px;
		background: linear-gradient(to right, #7f9fca, #7093c2 40%, #84a3cc);
	}

	.track button {
		height: 17px;
	}

	.before {
		flex: 310;
	}

	.thumb {
		flex: 161;
		display: flex;
		align-items: center;
		justify-content: center;
		border: 1px solid #4d628a;
		border-radius: 1px;
		background: linear-gradient(to right, #eef2f7, #dfe7f0 45%, #b7c9dd 50%, #c6d5e6);
	}

	.thumb i {
		width: 8px;
		height: 7px;
		background: repeating-linear-gradient(#6a7482 0 1px, transparent 1px 2px);
	}

	.after {
		flex: 96;
	}

	.browse {
		height: 17px;
	}

	/* Status bar */
	.status {
		flex: none;
		display: flex;
		align-items: center;
		height: 22px;
		border-top: 1px solid #567db1;
		background: linear-gradient(#d9e9fd, #c4dcfb 40%, #a9caf6 45%, #c5defd);
	}

	.cell {
		display: flex;
		align-items: center;
		align-self: stretch;
		padding: 0 8px 2px;
		border-right: 1px solid #8caedb;
	}

	.spell {
		gap: 16px;
		padding-left: 6px;
	}

	.tools {
		display: flex;
		align-self: stretch;
		margin-left: auto;
		padding: 0 3px 1px 5px;
		border-left: 2px solid #6b93cb;
		background: linear-gradient(#b9d4f9, #a3c4f1 40%, #86abe0 45%, #93b6e8);
	}

	.views {
		display: flex;
		align-items: center;
	}

	.views button {
		width: 18px;
		height: 18px;
		border: 1px solid #7f9fcf;
		border-width: 1px 0;
		border-right: 1px solid #a8c4e8;
		background: linear-gradient(#cfe1f9, #b4cff3);
	}

	.views button:first-child {
		border-radius: 3px 0 0 3px;
	}

	.views button:last-child {
		border-radius: 0 3px 3px 0;
	}

	.percent {
		width: 42px;
	}

	.round {
		width: 20px;
	}

	input[type='range'] {
		appearance: none;
		width: 98px;
		margin: 0;
		background: linear-gradient(#dce9fb, #dce9fb) center / 100% 1px no-repeat;
	}

	input[type='range']::-webkit-slider-thumb {
		appearance: none;
		width: 9px;
		height: 12px;
		border: 1px solid #566f96;
		border-radius: 1px 1px 5px 5px;
		background: #dfe9f6;
	}
</style>
